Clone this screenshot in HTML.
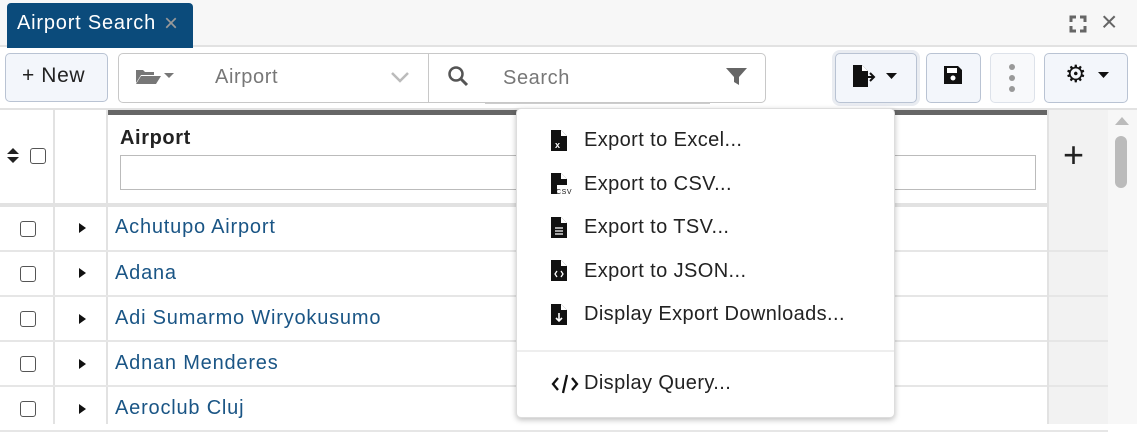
<!DOCTYPE html>
<html><head><meta charset="utf-8"><style>
*{box-sizing:border-box;margin:0;padding:0}
body{width:1137px;height:424px;overflow:hidden;background:#fff;font-family:"Liberation Sans",sans-serif;position:relative;color:#222;letter-spacing:0.6px}
.a{position:absolute}
.btn{position:absolute;background:#f3f6fb;border:1px solid #b9c3d3;border-radius:5px}
.row{position:absolute;left:0;width:1108px;height:45px;border-bottom:2px solid #e6e6e6}
.cb{position:absolute;left:20px;width:16px;height:16px;border:1.5px solid #555;border-radius:3px;background:#fff}
.tri{position:absolute;left:79px;width:0;height:0;border-top:5px solid transparent;border-bottom:5px solid transparent;border-left:7px solid #111}
.lnk{position:absolute;left:115px;font-size:20px;color:#1a5585;letter-spacing:0.8px}
.mi{position:absolute;left:584px;font-size:20px;color:#222;letter-spacing:0.4px}
.ic{position:absolute;left:551px}
</style></head><body>
<div class="a" style="left:0;top:0;width:1137px;height:47px;background:#f7f7f7;border-bottom:2px solid #e2e2e2"></div>
<div class="a" style="left:7px;top:3px;width:186px;height:45px;background:#0b4b7b;border-radius:4px 4px 0 0"></div>
<div class="a" style="left:17px;top:12px;font-size:20px;color:#fff;letter-spacing:0.8px">Airport Search</div>
<div class="a" style="left:164px;top:10px;font-size:24px;color:#999">×</div>
<svg class="a" style="left:1069px;top:15px" width="18" height="18" viewBox="0 0 18 18" fill="none" stroke="#666" stroke-width="3"><path d="M2 7V2h5M11 2h5v5M16 11v5h-5M7 16H2v-5"/></svg>
<div class="a" style="left:1101px;top:6px;font-size:28px;color:#666">×</div>

<div class="btn" style="left:5px;top:53px;width:103px;height:49px"></div>
<div class="a" style="left:22px;top:64px;font-size:21px;color:#222">+ New</div>
<div class="a" style="left:118px;top:53px;width:648px;height:50px;border:1px solid #c8c8c8;border-radius:5px"></div>
<div class="a" style="left:428px;top:53px;width:1px;height:50px;background:#c8c8c8"></div>
<svg class="a" style="left:136px;top:67px" width="42" height="18" viewBox="0 0 42 18"><path d="M0 3h7l2 2h9v3H5L0 16z M5 9h20l-5 8H0z" fill="#777"/><path d="M28 6h10l-5 5z" fill="#777"/></svg>
<div class="a" style="left:215px;top:66px;font-size:20px;color:#777">Airport</div>
<svg class="a" style="left:390px;top:71px" width="20" height="12"><path d="M2 2l8 8 8-8" stroke="#bbb" stroke-width="2.5" fill="none"/></svg>
<svg class="a" style="left:447px;top:65px" width="22" height="22"><circle cx="9" cy="9" r="6.5" stroke="#555" stroke-width="2.5" fill="none"/><path d="M14 14l6 6" stroke="#555" stroke-width="3"/></svg>
<div class="a" style="left:485px;top:62px;width:225px;height:42px;border-bottom:1px solid #ccc"></div>
<div class="a" style="left:503px;top:67px;font-size:20px;color:#777">Search</div>
<svg class="a" style="left:725px;top:67px" width="23" height="19"><path d="M1 1h21l-8 9v8l-5-3v-5z" fill="#666"/></svg>

<div class="btn" style="left:835px;top:53px;width:82px;height:50px;box-shadow:0 0 0 3px #e9ecf1"></div>
<svg class="a" style="left:852px;top:64px" width="50" height="24" viewBox="0 0 50 24"><path d="M1 1h9l6 6v16H1z" fill="#111"/><path d="M10 1v6h6" fill="#fff"/><path d="M9 13h13M18 9l4 4-4 4" stroke="#111" stroke-width="2" fill="none"/><path d="M34 9h11l-5.5 6z" fill="#111"/></svg>
<div class="btn" style="left:926px;top:53px;width:55px;height:50px"></div>
<svg class="a" style="left:943px;top:65px" width="20" height="20"><path d="M1 1h14l4 4v14H1z" fill="#111"/><rect x="4" y="3" width="10" height="5" fill="#fff"/><circle cx="10" cy="13" r="2.5" fill="#fff"/></svg>
<div class="btn" style="left:990px;top:53px;width:45px;height:50px;background:#f8f9fb;border-color:#dde2ea"></div>
<svg class="a" style="left:1008px;top:63px" width="8" height="32"><circle cx="4" cy="4" r="3" fill="#999"/><circle cx="4" cy="15" r="3" fill="#999"/><circle cx="4" cy="26" r="3" fill="#999"/></svg>
<div class="btn" style="left:1044px;top:53px;width:84px;height:50px"></div>
<div class="a" style="left:1065px;top:60px;font-size:24px;color:#111">⚙</div>
<svg class="a" style="left:1098px;top:72px" width="12" height="7"><path d="M0 0h11l-5.5 6z" fill="#111"/></svg>

<div class="a" style="left:0;top:108px;width:1137px;height:2px;background:#e2e2e2"></div>
<div class="a" style="left:0;top:110px;width:1108px;height:97px;border-bottom:4px solid #e2e2e2"></div>
<div class="a" style="left:108px;top:110px;width:940px;height:5px;background:#666"></div>
<div class="a" style="left:120px;top:127px;font-size:20px;font-weight:bold;color:#222">Airport</div>
<div class="a" style="left:120px;top:155px;width:916px;height:35px;border:1px solid #bbb"></div>
<svg class="a" style="left:6px;top:147px" width="14" height="18"><path d="M1 7h12L7 1zM1 10h12l-6 6z" fill="#222"/></svg>
<div class="cb" style="left:30px;top:148px"></div>
<div class="a" style="left:1047px;top:110px;width:61px;height:314px;background:#f2f2f2;border-left:2px solid #e2e2e2"></div>
<div class="a" style="left:1063px;top:134px;font-size:36px;color:#222">+</div>
<div class="a" style="left:53px;top:110px;width:2px;height:314px;background:#e2e2e2"></div>
<div class="a" style="left:106px;top:110px;width:2px;height:314px;background:#e2e2e2"></div>
<div class="a" style="left:1108px;top:110px;width:29px;height:314px;background:#f7f7f7"></div>
<svg class="a" style="left:1115px;top:116px" width="14" height="10"><path d="M0 9h14L7 1z" fill="#bbb"/></svg>
<div class="a" style="left:1115px;top:136px;width:12px;height:52px;background:#bbb;border-radius:6px"></div>

<div class="row" style="top:207px"></div><div class="cb" style="top:221px"></div><div class="tri" style="top:223px"></div><div class="lnk" style="top:216px">Achutupo Airport</div>
<div class="row" style="top:252px"></div><div class="cb" style="top:266px"></div><div class="tri" style="top:268px"></div><div class="lnk" style="top:262px">Adana</div>
<div class="row" style="top:297px"></div><div class="cb" style="top:311px"></div><div class="tri" style="top:314px"></div><div class="lnk" style="top:307px">Adi Sumarmo Wiryokusumo</div>
<div class="row" style="top:342px"></div><div class="cb" style="top:356px"></div><div class="tri" style="top:359px"></div><div class="lnk" style="top:352px">Adnan Menderes</div>
<div class="row" style="top:387px"></div><div class="cb" style="top:401px"></div><div class="tri" style="top:404px"></div><div class="lnk" style="top:397px">Aeroclub Cluj</div>
<div class="a" style="left:1047px;top:110px;width:2px;height:314px;background:#e2e2e2"></div>

<div class="a" style="left:516px;top:108px;width:379px;height:310px;background:#fff;border:1px solid #ddd;border-radius:5px;box-shadow:0 2px 6px rgba(0,0,0,.25)"></div>
<svg class="ic" style="top:130px" width="16" height="21"><path d="M0 0h10l6 6v15H0z" fill="#111"/><path d="M10 0v6h6" fill="#fff"/><text x="4" y="18" font-size="9" fill="#fff" font-family="Liberation Sans" font-weight="bold">x</text></svg>
<div class="mi" style="top:129px">Export to Excel...</div>
<svg class="ic" style="top:173px" width="22" height="21"><path d="M0 0h10l6 6v6H6v9H0z" fill="#111"/><path d="M10 0v6h6" fill="#fff"/><text x="5" y="21" font-size="7" fill="#111" font-family="Liberation Sans">CSV</text></svg>
<div class="mi" style="top:173px">Export to CSV...</div>
<svg class="ic" style="top:217px" width="16" height="21"><path d="M0 0h10l6 6v15H0z" fill="#111"/><path d="M10 0v6h6" fill="#fff"/><path d="M4 11h8M4 14h8M4 17h8" stroke="#fff" stroke-width="1.3"/></svg>
<div class="mi" style="top:216px">Export to TSV...</div>
<svg class="ic" style="top:260px" width="16" height="21"><path d="M0 0h10l6 6v15H0z" fill="#111"/><path d="M10 0v6h6" fill="#fff"/><path d="M6 11l-2 3 2 3M10 11l2 3-2 3" stroke="#fff" stroke-width="1.3" fill="none"/></svg>
<div class="mi" style="top:260px">Export to JSON...</div>
<svg class="ic" style="top:304px" width="16" height="21"><path d="M0 0h10l6 6v15H0z" fill="#111"/><path d="M10 0v6h6" fill="#fff"/><path d="M8 9v8M5 14l3 3 3-3" stroke="#fff" stroke-width="1.6" fill="none"/></svg>
<div class="mi" style="top:303px">Display Export Downloads...</div>
<div class="a" style="left:517px;top:350px;width:377px;height:2px;background:#eee"></div>
<svg class="ic" style="top:374px" width="28" height="20"><path d="M7 4L2 10l5 6M21 4l5 6-5 6M16 1l-4 18" stroke="#111" stroke-width="2.3" fill="none"/></svg>
<div class="mi" style="top:372px">Display Query...</div>
</body></html>
